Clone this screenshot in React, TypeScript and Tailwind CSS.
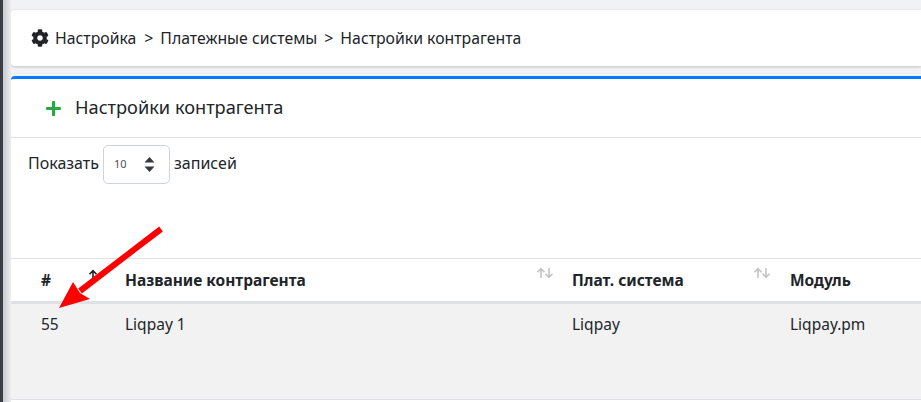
import { FaCog, FaPlus } from "react-icons/fa";

const SortIcon = ({ active = false }: { active?: boolean }) => (
  <svg width="18" height="12" viewBox="0 0 18 12" fill="none" strokeWidth="1.6" className={active ? "text-[#212529]" : "text-[#c4c4c4]"} stroke="currentColor">
    <path d="M5 11V2M1.5 5.2 5 1.6l3.5 3.6" />
    {!active && <path d="M13 1v9M9.5 6.8l3.5 3.6 3.5-3.6" />}
  </svg>
);

const Arrow = () => (
  <svg className="absolute left-[50px] top-[220px]" width="120" height="100" viewBox="0 0 120 100">
    <path d="M111 9 30 71" stroke="#ff0000" strokeWidth="6" />
    <path d="M9 88 23 62 30 73 40 79Z" fill="#ff0000" />
  </svg>
);

export default function App() {
  return (
    <div className="relative w-[921px] h-[402px] overflow-hidden bg-[#f1f2f5] font-['Noto_Sans',sans-serif] text-[16px] text-[#212529]">
      <div className="absolute left-0 top-0 h-full w-[3px] bg-[#3a3f45]" />
      <div className="absolute left-[3px] top-0 h-full w-[8px] bg-gradient-to-r from-[#c8cacd] to-[#eceef1]" />
      <div className="ml-[11px] pt-[10px]">
        <div className="flex h-[56px] items-center rounded-l-[4px] bg-white pl-[20px] pt-[1px] text-[15.8px] shadow-[0_1px_3px_rgba(0,0,0,0.2)]">
          <FaCog className="-mt-[2px] text-[18px] text-[#212529]" />
          <span className="ml-[6px]">Настройка</span>
          <span className="ml-[8px]">&gt;</span>
          <span className="ml-[7px]">Платежные системы</span>
          <span className="ml-[7px]">&gt;</span>
          <span className="ml-[7px]">Настройки контрагента</span>
        </div>
        <div className="mt-[10px] h-[400px] rounded-tl-[4px] border-t-[3px] border-[#007bff] bg-white">
          <div className="flex h-[59px] items-center border-b border-[#dee2e6] pl-[34px]">
            <FaPlus className="text-[17px] text-[#28a745]" />
            <span className="ml-[13px] text-[18.2px]">Настройки контрагента</span>
          </div>
          <div className="flex items-start pl-[17px] pt-[7px]">
            <span className="mt-[6px] w-[75px]">Показать</span>
            <div className="relative flex h-[39px] w-[67px] items-center rounded-[5px] border border-[#ced4da] pl-[10px] text-[11px] text-[#495057]">
              10
              <svg className="absolute right-[14px] top-[10px]" width="11" height="17" viewBox="0 0 11 17" fill="#343a40">
                <path d="M5.5 1 10.5 6.5H.5ZM5.5 16 .5 10.5h10Z" />
              </svg>
            </div>
            <span className="ml-[4px] mt-[6px]">записей</span>
          </div>
          <div className="mt-[74px] grid h-[46px] grid-cols-[114px_447px_218px_1fr] border-t border-[#dee2e6] border-b-[3px] pt-[1px] text-[15.5px] font-bold">
            <div className="relative flex items-center pl-[30px]">
              #
              <span className="absolute left-[77px] top-[9px]"><SortIcon active /></span>
            </div>
            <div className="relative flex items-center">
              Название контрагента
              <span className="absolute right-[18px] top-[7px]"><SortIcon /></span>
            </div>
            <div className="relative flex items-center">
              Плат. система
              <span className="absolute right-[19px] top-[7px]"><SortIcon /></span>
            </div>
            <div className="flex items-center">Модуль</div>
          </div>
          <div className="grid h-[96px] grid-cols-[114px_447px_218px_1fr] border-b border-[#dee2e6] bg-[#f2f2f2] pt-[9px] text-[15.5px]">
            <div className="pl-[30px]">55</div>
            <div>Liqpay 1</div>
            <div>Liqpay</div>
            <div>Liqpay.pm</div>
          </div>
        </div>
      </div>
      <Arrow />
    </div>
  );
}
